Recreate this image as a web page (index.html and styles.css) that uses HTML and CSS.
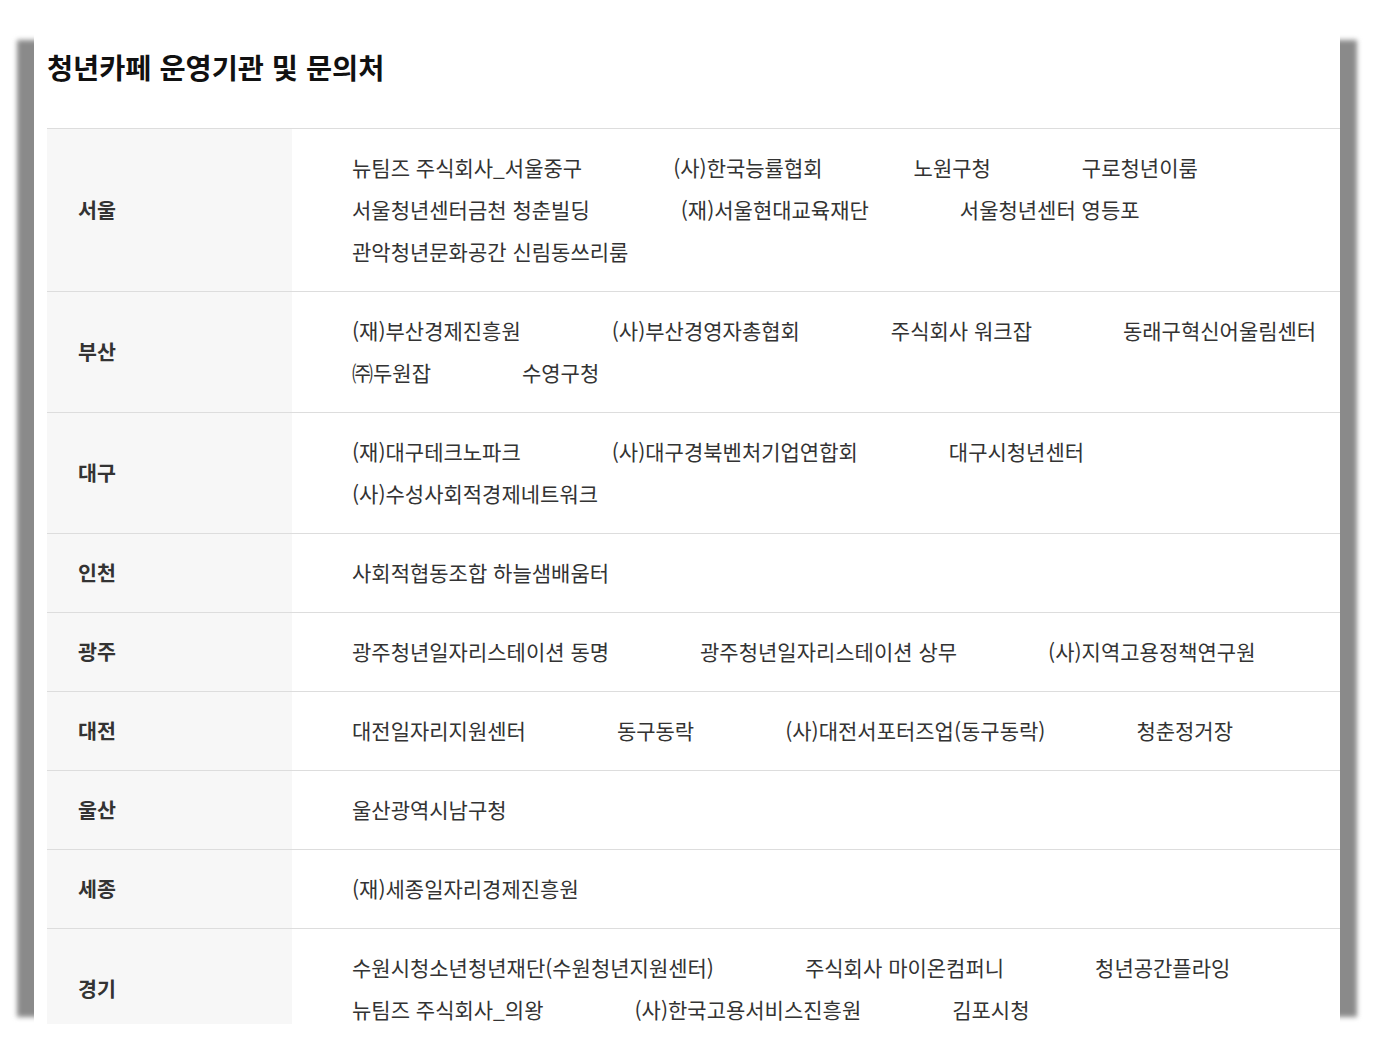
FILE: index.html
```html
<!DOCTYPE html>
<html lang="ko">
<head>
<meta charset="utf-8">
<title>청년카페 운영기관 및 문의처</title>
<link rel="stylesheet" href="styles.css">
</head>
<body>
<div class="stage">
  <div class="paper">
    <h2 class="title">청년카페 운영기관 및 문의처</h2>
    <table class="orgs">
      <tbody>
        <tr>
          <th>서울</th>
          <td>
            <div class="line"><span>뉴팀즈 주식회사_서울중구</span><span>(사)한국능률협회</span><span>노원구청</span><span>구로청년이룸</span></div>
            <div class="line"><span>서울청년센터금천 청춘빌딩</span><span>(재)서울현대교육재단</span><span>서울청년센터 영등포</span></div>
            <div class="line"><span>관악청년문화공간 신림동쓰리룸</span></div>
          </td>
        </tr>
        <tr>
          <th>부산</th>
          <td>
            <div class="line"><span>(재)부산경제진흥원</span><span>(사)부산경영자총협회</span><span>주식회사 워크잡</span><span>동래구혁신어울림센터</span></div>
            <div class="line"><span>㈜두원잡</span><span>수영구청</span></div>
          </td>
        </tr>
        <tr>
          <th>대구</th>
          <td>
            <div class="line"><span>(재)대구테크노파크</span><span>(사)대구경북벤처기업연합회</span><span>대구시청년센터</span></div>
            <div class="line"><span>(사)수성사회적경제네트워크</span></div>
          </td>
        </tr>
        <tr>
          <th>인천</th>
          <td>
            <div class="line"><span>사회적협동조합 하늘샘배움터</span></div>
          </td>
        </tr>
        <tr>
          <th>광주</th>
          <td>
            <div class="line"><span>광주청년일자리스테이션 동명</span><span>광주청년일자리스테이션 상무</span><span>(사)지역고용정책연구원</span></div>
          </td>
        </tr>
        <tr>
          <th>대전</th>
          <td>
            <div class="line"><span>대전일자리지원센터</span><span>동구동락</span><span>(사)대전서포터즈업(동구동락)</span><span>청춘정거장</span></div>
          </td>
        </tr>
        <tr>
          <th>울산</th>
          <td>
            <div class="line"><span>울산광역시남구청</span></div>
          </td>
        </tr>
        <tr>
          <th>세종</th>
          <td>
            <div class="line"><span>(재)세종일자리경제진흥원</span></div>
          </td>
        </tr>
        <tr>
          <th>경기</th>
          <td>
            <div class="line"><span>수원시청소년청년재단(수원청년지원센터)</span><span>주식회사 마이온컴퍼니</span><span>청년공간플라잉</span></div>
            <div class="line"><span>뉴팀즈 주식회사_의왕</span><span>(사)한국고용서비스진흥원</span><span>김포시청</span></div>
          </td>
        </tr>
      </tbody>
    </table>
  </div>
</div>
</body>
</html>
```

FILE: styles.css
```css
html, body {
  margin: 0;
  padding: 0;
  background: #ffffff;
}

body {
  font-family: "Noto Sans CJK KR", "Noto Sans", sans-serif;
  color: #333333;
}

.stage {
  position: relative;
  width: 1374px;
  height: 1059px;
  overflow: hidden;
}

/* shadow strips visible at left and right of the sheet */
.stage::before {
  content: "";
  position: absolute;
  left: 17px;
  top: 40px;
  width: 1340px;
  height: 977px;
  background: #8a8a8a;
  filter: blur(2.5px);
}

.paper {
  position: relative;
  z-index: 1;
  margin-left: 34px;
  width: 1306px;
  height: 1024px;
  overflow: hidden;
  background: #ffffff;
  padding-left: 13px;
  box-sizing: border-box;
}

.title {
  margin: 0;
  padding-top: 48px;
  font-size: 28.4px;
  line-height: 38px;
  font-weight: 700;
  color: #111111;
  margin-bottom: 42px;
}

.orgs {
  width: 1293px;
  border-collapse: collapse;
  border-spacing: 0;
}

.orgs tr {
  border-top: 1px solid #dddddd;
}

.orgs th {
  width: 245px;
  box-sizing: border-box;
  background: #f7f7f7;
  text-align: left;
  vertical-align: middle;
  padding: 0 0 2px 31px;
  font-size: 20.6px;
  font-weight: 700;
  color: #333333;
}

.orgs td {
  padding: 17px 0 19px 60px;
  vertical-align: middle;
}

.line {
  display: flex;
  column-gap: 91px;
  white-space: nowrap;
  font-size: 21px;
  line-height: 42px;
  color: #333333;
}
```
